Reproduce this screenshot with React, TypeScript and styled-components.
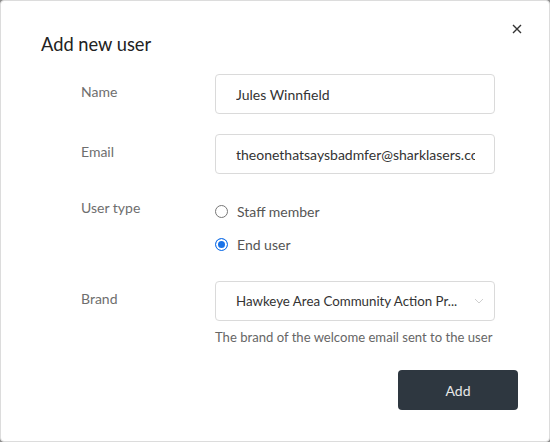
import React from 'react';
import styled, { createGlobalStyle } from 'styled-components';

const GlobalStyle = createGlobalStyle`
	* {
		box-sizing: border-box;
	}

	body {
		margin: 0;
		background: #8c8c8c;
		font-family: Lato, 'Open Sans', sans-serif;
	}
`;

const Modal = styled.div`
	width: 550px;
	height: 442px;
	background: #fff;
	border: 1px solid #dcdcdc;
	border-radius: 4px;
	padding: 21px 31px 31px 40px;
	display: flex;
	flex-direction: column;
`;

const Header = styled.div`
	display: flex;
	justify-content: space-between;
	align-items: flex-start;
	height: 52px;
`;

const Title = styled.h2`
	margin: 10px 0 0;
	font-size: 18.3px;
	font-weight: 400;
	line-height: 24px;
	color: #222;
`;

const CloseButton = styled.button`
	border: 0;
	background: none;
	padding: 0;
	margin: -8px -14px 0 0;
	width: 30px;
	height: 30px;
	display: flex;
	align-items: center;
	justify-content: center;
	cursor: pointer;
`;

const Form = styled.div`
	display: grid;
	grid-template-columns: 134px 280px;
	row-gap: 20px;
	padding-left: 40px;
	align-items: start;
`;

const Label = styled.label<{ $lh?: number }>`
	font-size: 14px;
	line-height: ${(p) => p.$lh || 36}px;
	color: #6e6e6e;
`;

const Field = styled.div`
	display: flex;
	flex-direction: column;
`;

const TextInput = styled.input`
	width: 280px;
	height: 40px;
	border: 1px solid #dadada;
	border-radius: 4px;
	padding: 0 19px 0 20px;
	font-family: inherit;
	font-size: 14px;
	color: #333;
	outline: none;
	background: #fff;
`;

const RadioGroup = styled.div`
	display: flex;
	flex-direction: column;
	margin-top: 1px;
`;

const RadioRow = styled.label`
	display: flex;
	align-items: center;
	height: 33px;
	font-size: 14px;
	color: #555;
	gap: 9px;
`;

const RadioDot = styled.span<{ $checked?: boolean }>`
	width: 13px;
	height: 13px;
	border-radius: 50%;
	flex: 0 0 13px;
	border: ${(p) => (p.$checked ? '1.5px solid #1a73e8' : '1px solid #777')};
	background: ${(p) => (p.$checked ? '#1a73e8' : '#fff')};
	box-shadow: ${(p) => (p.$checked ? 'inset 0 0 0 2px #fff' : 'none')};
`;

const Select = styled.div`
	width: 280px;
	height: 40px;
	border: 1px solid #dadada;
	border-radius: 4px;
	padding: 0 10px 0 20px;
	display: flex;
	align-items: center;
	gap: 6px;
	font-size: 13.3px;
	color: #333;
`;

const SelectValue = styled.span`
	flex: 1;
	white-space: nowrap;
`;

const Help = styled.div`
	margin-top: 6px;
	font-size: 13.1px;
	line-height: 20px;
	color: #666;
	white-space: nowrap;
`;

const Footer = styled.div`
	margin-top: auto;
	display: flex;
	justify-content: flex-end;
`;

const AddButton = styled.button`
	width: 120px;
	height: 40px;
	border: 0;
	border-radius: 4px;
	background: #2e3740;
	color: #e8e8e8;
	font-family: inherit;
	font-size: 14px;
	cursor: pointer;
`;

const App = () => {
	return (
		<>
			<GlobalStyle />
			<Modal>
				<Header>
					<Title>Add new user</Title>
					<CloseButton aria-label='Close'>
						<svg width='10' height='10' viewBox='0 0 10 10'>
							<path d='M1 1L9 9M9 1L1 9' stroke='#333' strokeWidth='1.4' />
						</svg>
					</CloseButton>
				</Header>
				<Form>
					<Label>Name</Label>
					<TextInput readOnly value='Jules Winnfield' />

					<Label>Email</Label>
					<TextInput readOnly value='theonethatsaysbadmfer@sharklasers.com' />

					<Label $lh={28}>User type</Label>
					<RadioGroup>
						<RadioRow>
							<RadioDot />
							Staff member
						</RadioRow>
						<RadioRow>
							<RadioDot $checked />
							End user
						</RadioRow>
					</RadioGroup>

					<Label $lh={36}>Brand</Label>
					<Field>
						<Select>
							<SelectValue>Hawkeye Area Community Action Pr...</SelectValue>
							<svg width='10' height='6' viewBox='0 0 10 6'>
								<path d='M1 1L5 5L9 1' stroke='#cfcfcf' strokeWidth='1' fill='none' />
							</svg>
						</Select>
						<Help>The brand of the welcome email sent to the user</Help>
					</Field>
				</Form>
				<Footer>
					<AddButton>Add</AddButton>
				</Footer>
			</Modal>
		</>
	);
};

export default App;
